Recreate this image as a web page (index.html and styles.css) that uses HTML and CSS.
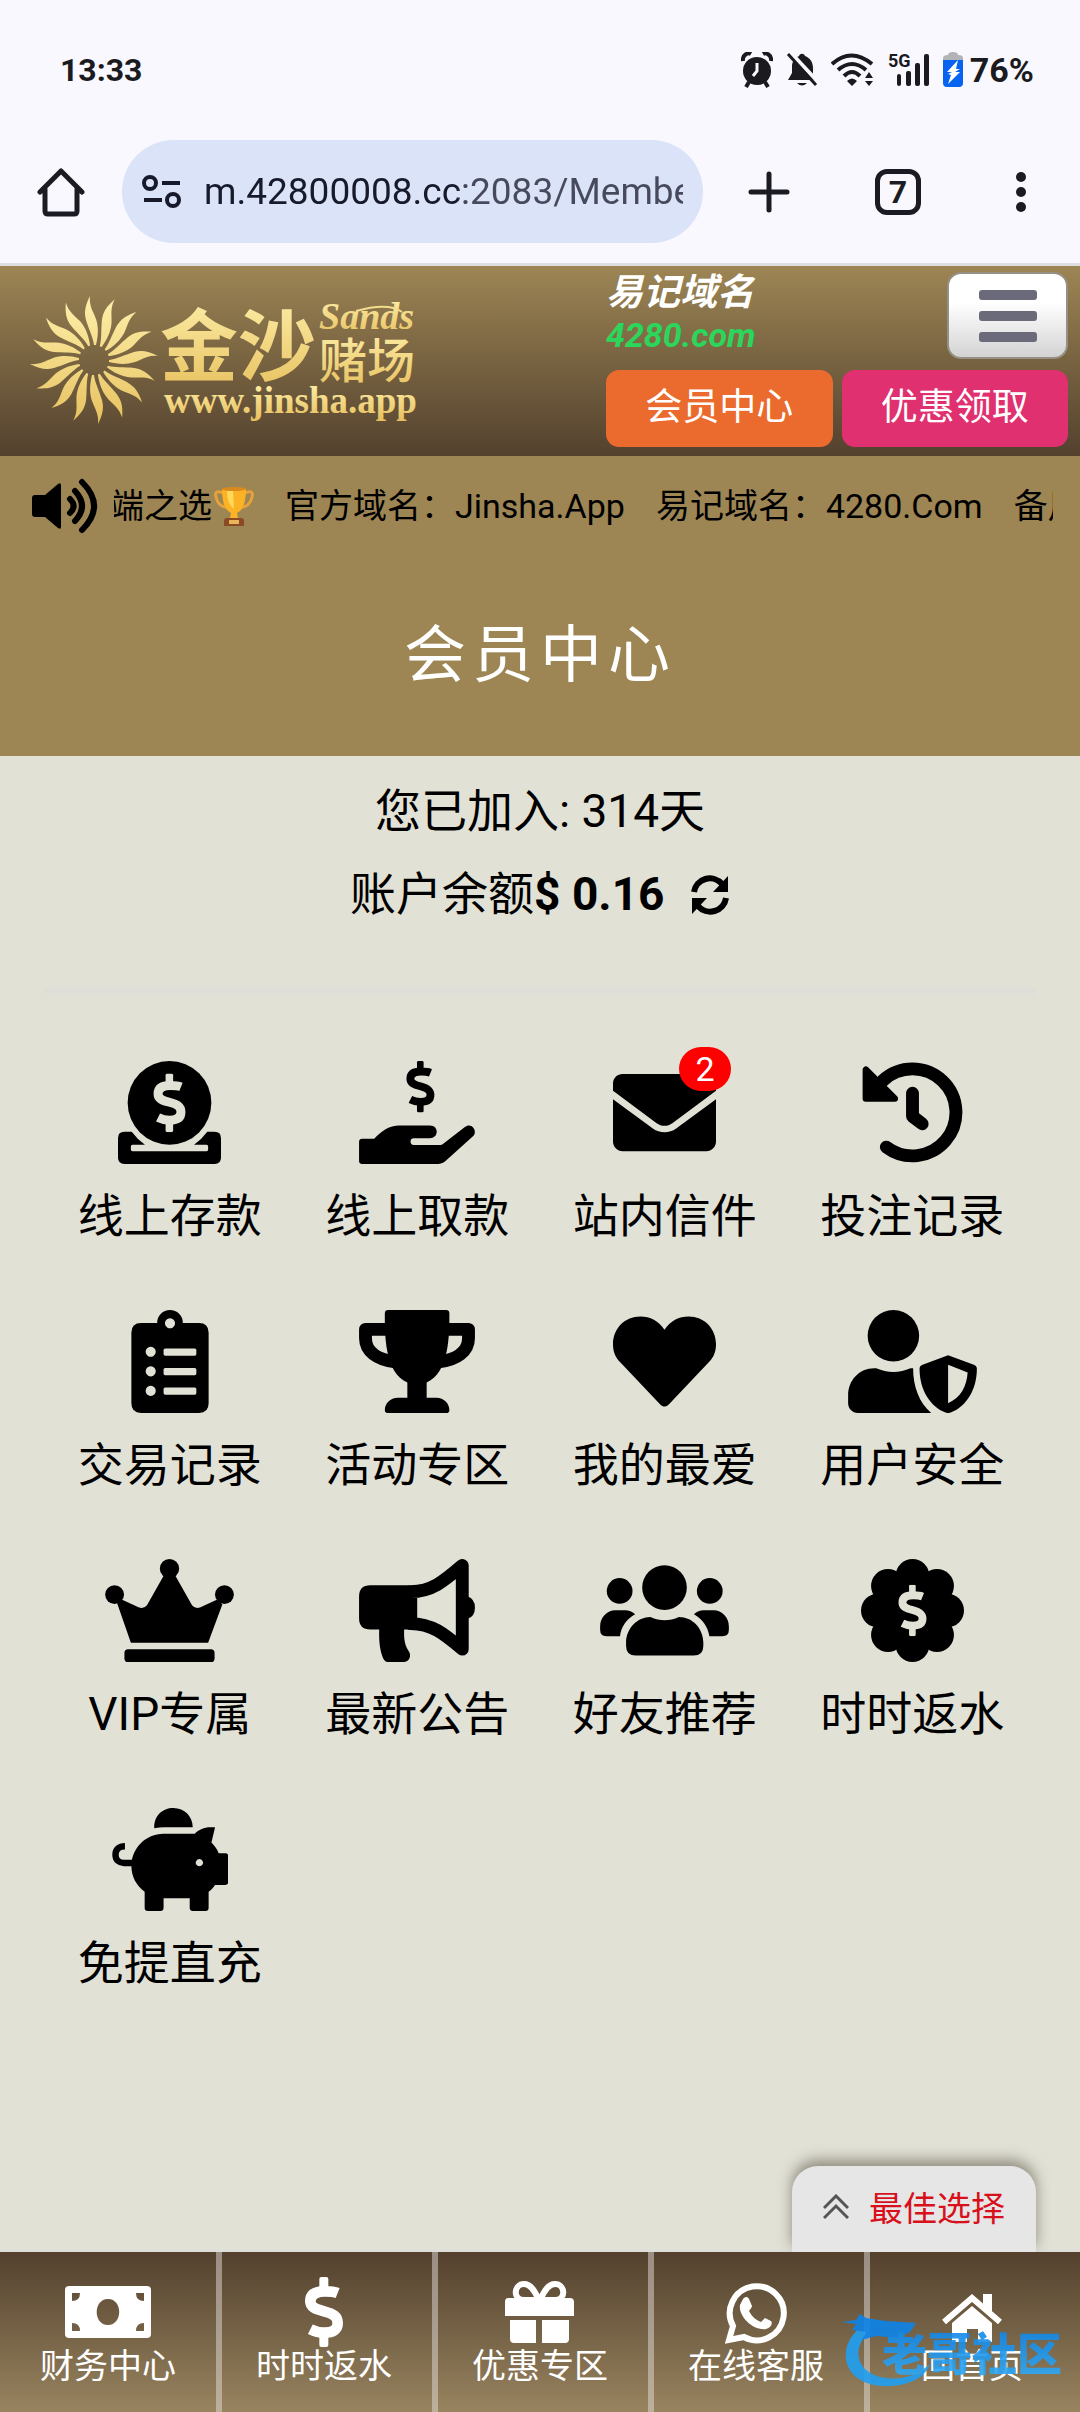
FILE: index.html
```
<!DOCTYPE html>
<html lang="zh-CN">
<head>
  <meta charset="UTF-8">
  <meta name="viewport" content="width=device-width, initial-scale=1">
  <title>会员中心</title>
  <link rel="stylesheet" href="styles.css">
</head>
<body>
  <!-- shared shapes -->
  <svg class="defs" width="0" height="0" aria-hidden="true">
    <defs>
      <linearGradient id="gold" x1="0" y1="0" x2="0" y2="1">
        <stop offset="0" stop-color="#fff2ae"/>
        <stop offset="1" stop-color="#e6bf5c"/>
      </linearGradient>
      <linearGradient id="blue" x1="0" y1="0" x2="0" y2="1">
        <stop offset="0" stop-color="#0a7fe6"/>
        <stop offset="1" stop-color="#35aef5"/>
      </linearGradient>
      <symbol id="dollar" viewBox="0 0 114 210">
        <rect x="43" y="0" width="27" height="42" rx="6" fill="currentColor"/>
        <rect x="43" y="168" width="27" height="42" rx="6" fill="currentColor"/>
        <path d="M98 48C88 44 76 43 60 43C32 43 16 52 16 73C16 90 30 96 57 103C84 110 98 118 98 138C98 158 84 167 58 167C40 167 30 164 16 157" fill="none" stroke="currentColor" stroke-width="32"/>
      </symbol>
      <path id="ray" d="M0-15C-1-23-5-30-8-40C-10-48-9-54-4-64C-5-54-1-49 2-41C5-32 4-23 2-15z"/>
    </defs>
  </svg>

  <div class="status">
    <span class="clock">13:33</span>
    <div class="status-icons">
      <svg width="32" height="36" viewBox="0 0 32 36"><circle cx="16" cy="19" r="14"/><path d="M2 9C1 3 7 0 10 2M30 9C31 3 25 0 22 2M8 30l-3 5M24 30l3 5" fill="none" stroke="#1b1b1f" stroke-width="4"/><path d="M16 11v8l-4 5" fill="none" stroke="#f9f8fe" stroke-width="3"/></svg>
      <svg width="32" height="36" viewBox="0 0 32 36"><path d="M2 28L6 21V13C7 7 11 5 13 4c1-3 5-3 6 0 5 2 8 6 8 12v6l4 6zM11 31h10q-5 5-10 0z"/><path d="M4 0l28 30" stroke="#f9f8fe" stroke-width="4"/><path d="M2 2l28 31" stroke="#1b1b1f" stroke-width="3"/></svg>
      <svg width="44" height="36" viewBox="0 0 44 36"><g fill="none" stroke="#1b1b1f" stroke-width="4"><path d="M1 12Q20-5 41 12M7 18Q21 6 35 18M13 24Q21 16 29 24"/></g><path d="M16 29q5-5 10 0l-5 5zM34 26l4-6 4 6zM34 29h8l-4 5z"/></svg>
      <svg width="42" height="36" viewBox="0 0 42 36"><text x="0" y="15" class="net">5G</text><rect x="9" y="22" width="4" height="12" rx="2"/><rect x="18" y="19" width="5" height="15" rx="2"/><rect x="27" y="11" width="5" height="23" rx="2"/><rect x="36" y="2" width="5" height="32" rx="2"/></svg>
      <svg width="20" height="36" viewBox="0 0 20 36"><path d="M0 9V6q0-3 5-3 0-3 5-3t5 3q5 0 5 3v3z" fill="#b4b3b8"/><path d="M0 8h20v23q0 4-4 4H4q-4 0-4-4z" fill="#0764f0"/><path d="M15 8L4 20h5l-4 2 3 1-3 9 12-12h-5l5-3h-4z" fill="#fff"/></svg>
      <span class="battery">76%</span>
    </div>
  </div>

  <div class="toolbar">
    <button class="tool home" aria-label="主页"><svg width="48" height="50" viewBox="0 0 48 50" fill="none" stroke="#1b1b24" stroke-width="5" stroke-linecap="round" stroke-linejoin="round"><path d="M3 25L24 4l21 21M8 22v22q0 3 3 3h26q3 0 3-3V22"/></svg></button>
    <div class="address">
      <svg width="40" height="34" viewBox="0 0 40 34" fill="none" stroke="#161a2b" stroke-width="4"><circle cx="8" cy="8" r="6"/><path d="M20 8h18M2 25h18"/><circle cx="31" cy="25" r="6"/></svg>
      <input class="url" type="text" aria-label="网址" value="m.42800008.cc:2083/Member">
    </div>
    <button class="tool plus" aria-label="新标签页"><svg width="42" height="42" viewBox="0 0 42 42" stroke="#1b1b24" stroke-width="5" stroke-linecap="round"><path d="M21 3v36M3 21h36"/></svg></button>
    <button class="tool tabs" aria-label="标签页"><span class="count">7</span></button>
    <button class="tool more" aria-label="更多"><svg width="12" height="44" viewBox="0 0 12 44" fill="#1b1b24"><circle cx="6" cy="7" r="5"/><circle cx="6" cy="22" r="5"/><circle cx="6" cy="37" r="5"/></svg></button>
  </div>

  <header class="header">
    <a class="logo" href="#" aria-label="金沙赌场">
      <svg width="390" height="140" viewBox="0 0 390 140">
        <clipPath id="sun">
          <use href="#ray" transform="translate(66 70)"/>
          <use href="#ray" transform="translate(66 70) rotate(22.5)"/>
          <use href="#ray" transform="translate(66 70) rotate(45)"/>
          <use href="#ray" transform="translate(66 70) rotate(67.5)"/>
          <use href="#ray" transform="translate(66 70) rotate(90)"/>
          <use href="#ray" transform="translate(66 70) rotate(112.5)"/>
          <use href="#ray" transform="translate(66 70) rotate(135)"/>
          <use href="#ray" transform="translate(66 70) rotate(157.5)"/>
          <use href="#ray" transform="translate(66 70) rotate(180)"/>
          <use href="#ray" transform="translate(66 70) rotate(202.5)"/>
          <use href="#ray" transform="translate(66 70) rotate(225)"/>
          <use href="#ray" transform="translate(66 70) rotate(247.5)"/>
          <use href="#ray" transform="translate(66 70) rotate(270)"/>
          <use href="#ray" transform="translate(66 70) rotate(292.5)"/>
          <use href="#ray" transform="translate(66 70) rotate(315)"/>
          <use href="#ray" transform="translate(66 70) rotate(337.5)"/>
        </clipPath>
        <circle cx="66" cy="70" r="68" fill="url(#gold)" clip-path="url(#sun)"/>
        <g fill="url(#gold)">
          <text x="132" y="85" class="logo-main">金沙</text>
          <text x="291" y="39" class="logo-script">Sands</text>
          <text x="291" y="88" class="logo-sub">赌场</text>
          <text x="136" y="123" class="logo-url">www.jinsha.app</text>
        </g>
        <path d="M328 21Q360 12 374 22" fill="none" stroke="#f3dc8c" stroke-width="2"/>
      </svg>
    </a>
    <div class="header-side">
      <div class="header-top">
        <p class="domain">易记域名<br><span>4280.com</span></p>
        <button class="menu" aria-label="菜单"><i></i><i></i><i></i></button>
      </div>
      <div class="header-links">
        <a class="pill orange" href="#">会员中心</a>
        <a class="pill pink" href="#">优惠领取</a>
      </div>
    </div>
  </header>

  <div class="notice">
    <svg width="66" height="56" viewBox="0 0 66 56"><path d="M0 20q0-3 3-3h10L26 6q3-2 3 1v42q0 3-3 1L13 39H3q-3 0-3-3z"/><g fill="none" stroke="#000" stroke-width="6" stroke-linecap="round"><path d="M38 21q7 7 0 14M43 13q14 15 0 30M50 4q24 24 0 48"/></g></svg>
    <div class="marquee">
      <div class="marquee-text">
        <span class="first">端之选<svg width="40" height="40" viewBox="0 0 40 40"><path d="M9 7Q0 3 2 11q2 10 13 11M31 7q9-4 7 4-2 10-13 11" fill="none" stroke="#e8a23c" stroke-width="3"/><path d="M8 3h24q0 20-9 24l1 5h-8l1-5Q8 23 8 3z" fill="#fbb224"/><path d="M13 5h6l1 18Q13 18 13 5z" fill="#ffd95c"/><ellipse cx="20" cy="3" rx="12" ry="2" fill="#d98a1c"/><path d="M10 40v-5q0-3 3-3h14q3 0 3 3v5z" fill="#8a4a26"/><path d="M15 34h10v4H15z" fill="#e9b45a"/></svg></span>
        <span>官方域名：Jinsha.App</span>
        <span>易记域名：4280.Com</span>
        <span>备用域名</span>
      </div>
    </div>
  </div>

  <h1 class="title">会员中心</h1>

  <main class="main">
    <div class="account">
      <p>您已加入: 314天</p>
      <p>账户余额<b>$ 0.16</b>
        <button class="refresh" aria-label="刷新"><svg width="40" height="40" viewBox="0 0 40 40"><g fill="none" stroke="#000" stroke-width="6"><path d="M4 17A16 16 0 0 1 32 9M36 23A16 16 0 0 1 8 31"/></g><path d="M38 1v16H23zM2 39V23h15z"/></svg></button>
      </p>
    </div>
    <hr class="line">

    <nav class="grid" aria-label="会员功能">
      <a class="item" href="#">
        <svg width="103" height="103" viewBox="0 0 512 512"><circle cx="256" cy="208" r="208"/><path d="M68 352H32Q0 352 0 384v96q0 32 32 32h448q32 0 32-32v-96q0-32-32-32h-36q-28 38-66 64h62q8 0 8 8v16q0 8-8 8H72q-8 0-8-8v-16q0-8 8-8h62q-38-26-66-64z"/><use class="cut" href="#dollar" x="172" y="62" width="168" height="292"/></svg>
        <span>线上存款</span>
      </a>
      <a class="item" href="#">
        <svg width="116" height="103" viewBox="0 0 576 512"><use href="#dollar" x="223" y="0" width="164" height="256"/><path d="M0 402q0-16 16-16h59C115 345 150 320 200 320H352c22 0 34 14 34 32s-14 32-34 32H272q-16 0-16 16t16 18H400c8 0 14-2 20-8L526 328c14-12 32-10 42 4 12 16 10 34-6 46L427 499c-12 9-28 13-44 13H16q-16 0-16-16z"/></svg>
        <span>线上取款</span>
      </a>
      <a class="item" href="#">
        <svg width="103" height="103" viewBox="0 0 512 512"><path d="M48 64C21 64 0 85 0 112v36L217 309c23 17 55 17 78 0L512 148v-36c0-27-21-48-48-48zM0 190V400c0 27 21 48 48 48H464c27 0 48-21 48-48V190L314 335c-34 25-82 25-116 0z"/></svg>
        <em class="badge">2</em>
        <span>站内信件</span>
      </a>
      <a class="item" href="#">
        <svg width="103" height="103" viewBox="0 0 512 512"><g fill="none" stroke="#000" stroke-width="64" stroke-linecap="round" stroke-linejoin="round"><path d="M108 98A216 216 0 1 1 126 428"/><path d="M256 160V275L304 312"/></g><path d="M24 43V186H168z" stroke="#000" stroke-width="32" stroke-linejoin="round"/></svg>
        <span>投注记录</span>
      </a>
      <a class="item" href="#">
        <svg width="78" height="103" viewBox="0 0 384 512"><path fill-rule="evenodd" d="M48 64H128A64 64 0 0 1 256 64H336q48 0 48 48V464q0 48-48 48H48q-48 0-48-48V112Q0 64 48 64zM192 41a25 25 0 1 0 .1 0zM96 183a25 25 0 1 0 .1 0zM96 280a25 25 0 1 0 .1 0zM96 377a25 25 0 1 0 .1 0zM168 191h147q8 0 8 8v20q0 8-8 8H168q-8 0-8-8v-20q0-8 8-8zM168 288h147q8 0 8 8v20q0 8-8 8H168q-8 0-8-8v-20q0-8 8-8zM168 385h147q8 0 8 8v20q0 8-8 8H168q-8 0-8-8v-20q0-8 8-8z"/></svg>
        <span>交易记录</span>
      </a>
      <a class="item" href="#">
        <svg width="116" height="103" viewBox="0 0 576 512"><path d="M145 0H432q17 0 17 17C449 120 450 310 336 360V436H384c38 0 65 28 65 62q0 14-16 14H145q-17 0-17-14c0-34 27-62 65-62H240V360C126 310 128 120 128 17Q128 0 145 0z"/><path d="M140 96H32V140C32 205 90 246 180 258M436 96H544V140C544 205 486 246 396 258" fill="none" stroke="#000" stroke-width="64" stroke-linejoin="round"/></svg>
        <span>活动专区</span>
      </a>
      <a class="item" href="#">
        <svg width="103" height="103" viewBox="0 0 512 512"><path d="M0 170C0 90 60 32 136 32c48 0 92 22 120 66 28-44 72-66 120-66C452 32 512 90 512 170c0 38-12 66-36 90L276 471c-12 12-28 12-40 0L36 260C12 236 0 208 0 170z"/></svg>
        <span>我的最爱</span>
      </a>
      <a class="item" href="#">
        <svg width="129" height="103" viewBox="0 0 640 512"><circle cx="225" cy="128" r="128"/><path d="M0 464V424C0 350 55 290 130 290h10c27 12 56 18 85 18s58-6 85-18h13c0 90 30 172 90 222H48C21 512 0 491 0 464z"/><path fill-rule="evenodd" d="M497 225L625 272c10 4 15 10 15 20C640 400 585 480 510 510c-8 3-18 3-26 0C410 480 355 400 355 292c0-10 5-16 15-20zM497 272V464C560 435 590 380 594 311z"/></svg>
        <span>用户安全</span>
      </a>
      <a class="item" href="#">
        <svg width="129" height="103" viewBox="0 0 640 512"><circle cx="320" cy="48" r="48"/><circle cx="47" cy="177" r="47"/><circle cx="593" cy="177" r="47"/><path d="M85 203L166 240Q192 250 208 230L295 76H345L432 230Q448 250 474 240L555 203 583 225 512 416H128L58 215z"/><rect x="96" y="448" width="448" height="64" rx="18"/></svg>
        <span>VIP专属</span>
      </a>
      <a class="item" href="#">
        <svg width="116" height="103" viewBox="0 0 576 512"><path d="M56 131H257V350H224C222 400 228 430 248 460c14 24 0 52-26 52H148c-14 0-22-6-28-18-14-34-22-74-20-144H56q-56 0-56-56V187q0-56 56-56zM540 187q36 12 36 55t-36 55z"/><path d="M257 162C360 162 420 112 513 32V448C420 370 360 321 257 321z" fill="none" stroke="#000" stroke-width="64" stroke-linejoin="round"/></svg>
        <span>最新公告</span>
      </a>
      <a class="item" href="#">
        <svg width="129" height="103" viewBox="0 0 640 512"><circle cx="320" cy="142" r="111"/><circle cx="97" cy="159" r="64"/><circle cx="545" cy="159" r="64"/><path d="M129 416C129 345 185 288 250 288c24 12 48 16 71 16s47-4 71-16C459 288 513 345 513 416v16q0 48-48 48H177q-48 0-48-48zM0 335C0 290 35 255 75 255h50c18 0 35 6 49 20C130 300 103 340 99 384H32q-32 0-32-32zM640 335C640 290 605 255 565 255h-50c-18 0-35 6-49 20C510 300 537 340 543 384h65q32 0 32-32z"/></svg>
        <span>好友推荐</span>
      </a>
      <a class="item" href="#">
        <svg width="103" height="103" viewBox="0 0 512 512"><circle cx="256" cy="256" r="180"/><circle cx="256" cy="84" r="84"/><circle cx="256" cy="428" r="84"/><circle cx="84" cy="256" r="84"/><circle cx="428" cy="256" r="84"/><circle cx="134" cy="134" r="84"/><circle cx="378" cy="134" r="84"/><circle cx="134" cy="378" r="84"/><circle cx="378" cy="378" r="84"/><use class="cut" href="#dollar" x="176" y="128" width="160" height="256"/></svg>
        <span>时时返水</span>
      </a>
      <a class="item" href="#">
        <svg width="116" height="103" viewBox="0 0 576 512"><path d="M210 101C206 40 250 0 305 0s96 42 96 96H260q-25 0-50 5z"/><path fill-rule="evenodd" d="M256 128H411C430 108 458 96 488 96H512L494 172C512 190 522 205 530 225H562q16 0 16 16V367q0 16-16 16H512c-8 12-18 24-32 33V496q0 16-16 16H402q-16 0-16-16V448H256V496q0 16-16 16H178q-16 0-16-16V416C120 385 96 340 96 288C96 200 168 128 256 128zM434 254a18 18 0 1 0 .1 0z"/><path d="M64 190C35 190 17 205 17 232s20 41 42 41H110" fill="none" stroke="#000" stroke-width="32"/></svg>
        <span>免提直充</span>
      </a>
    </nav>
  </main>

  <nav class="bottom" aria-label="底部导航">
    <button class="best"><svg width="26" height="26" viewBox="0 0 26 26" fill="none" stroke="#555" stroke-width="3"><path d="M1 14L13 2l12 12M1 24L13 12l12 12"/></svg>最佳选择</button>
    <a href="#"><svg width="86" height="70" viewBox="0 0 86 70"><path fill-rule="evenodd" d="M4 9H82q4 0 4 4V57q0 4-4 4H4q-4 0-4-4V13Q0 9 4 9zM7 16v8q8 0 8-8zM79 16v8q-8 0-8-8zM7 54v-8q8 0 8 8zM79 54v-8q-8 0-8 8zM43 22c-15 0-15 26 0 26s15-26 0-26z"/></svg><span>财务中心</span></a>
    <a href="#"><svg width="40" height="70" viewBox="0 0 40 70"><use href="#dollar" width="40" height="70"/></svg><span>时时返水</span></a>
    <a href="#"><svg width="72" height="70" viewBox="0 0 72 70"><g fill="none" stroke="#fff" stroke-width="6"><path d="M35 23H20C8 23 10 7 20 7 28 7 32 17 35 23zM36 23H51C63 23 61 7 51 7 43 7 39 17 36 23z"/></g><path d="M4 21H66q4 0 4 4V39H1V25q0-4 3-4zM6 43H32V66H10q-4 0-4-4zM38 43H65V62q0 4-4 4H38z"/></svg><span>优惠专区</span></a>
    <a href="#"><svg width="62" height="70" viewBox="0 0 62 70"><path d="M4 63L8 49A27 27 0 1 1 19 60z" fill="none" stroke="#fff" stroke-width="6"/><path d="M18 22c3-3 5-2 6 0l3 7c0 2-2 3-3 5 3 6 7 9 12 11l4-4 6 3c2 2 0 7-5 8-14 2-28-14-26-24z"/></svg><span>在线客服</span></a>
    <a href="#"><svg width="62" height="70" viewBox="0 0 62 70"><path d="M3 45L31 21 59 45" fill="none" stroke="#fff" stroke-width="6"/><path d="M42 17h9v18l-9-8zM11 46L31 29 51 46V65H37V52H26V65H11z"/></svg><span>回首页</span></a>
    <svg class="stamp" width="224" height="76" viewBox="0 0 224 76" aria-hidden="true">
      <path d="M22 11C-8 30-2 74 48 72 70 71 84 62 88 50 74 62 60 66 44 64 14 60 8 34 28 18z" fill="#20a0f2"/>
      <path d="M0 8l14-2 4-6 6 4 20 3 30 2-6 9-12 6-22-2-14 4 4-8-14-2 4-6z" fill="#0c84ea"/>
      <text x="40" y="57" class="stamp-text" fill="url(#blue)">老哥社区</text>
    </svg>
  </nav>
</body>
</html>
```
FILE: styles.css
```
:root {
  --gold: #9d8554;
  --brown: #53412e;
  --bg: #e2e1d6;
  --chrome: #f9f8fe;
  --ink: #1b1b1f;
}
* { box-sizing: border-box; margin: 0; padding: 0; }
body {
  font-family: Roboto, "Noto Sans CJK SC", sans-serif;
  background: var(--bg);
  color: #000;
  min-height: 100vh;
  display: flex;
  flex-direction: column;
}
a { color: inherit; text-decoration: none; }
button { font: inherit; border: none; background: none; }
svg { display: block; }
.defs { position: absolute; }

/* phone status bar */
.status {
  display: flex;
  justify-content: space-between;
  align-items: center;
  height: 140px;
  padding: 0 46px 0 60px;
  background: var(--chrome);
  color: var(--ink);
  font-size: 32px;
  font-weight: 700;
}
.status-icons {
  display: flex;
  align-items: center;
  gap: 13px;
}
.status-icons svg { fill: var(--ink); }
.net { font-size: 18px; font-weight: 700; }
.battery {
  margin-left: -6px;
  font-size: 34px;
}

/* browser toolbar */
.toolbar {
  display: flex;
  align-items: center;
  padding-bottom: 20px;
  background: var(--chrome);
  border-bottom: 3px solid #dedde0;
}
.tool {
  display: flex;
  justify-content: center;
  align-items: center;
  height: 103px;
}
.home { width: 122px; }
.plus { width: 132px; }
.tabs { width: 126px; }
.more { width: 119px; }
.address {
  flex: 1;
  min-width: 0;
  display: flex;
  align-items: center;
  gap: 22px;
  height: 103px;
  padding: 0 20px;
  border-radius: 52px;
  background: #dbe3f8;
}
.url {
  flex: 1;
  min-width: 0;
  border: none;
  outline: none;
  font-family: Roboto, sans-serif;
  font-size: 37px;
  color: transparent;
  background: linear-gradient(90deg, #161a2b 252px, #474a5c 262px);
  background-clip: text;
  -webkit-background-clip: text;
}
.count {
  width: 46px;
  height: 46px;
  border: 5px solid #1b1b24;
  border-radius: 12px;
  font-size: 32px;
  font-weight: 700;
  line-height: 36px;
  color: #1b1b24;
}

/* site header */
.header {
  display: flex;
  justify-content: space-between;
  padding: 6px 12px 9px 28px;
  background: linear-gradient(var(--gold), var(--brown));
}
.logo { padding-top: 18px; }
.logo-main { font-family: "Noto Sans CJK SC", sans-serif; font-size: 78px; font-weight: 700; }
.logo-sub { font-family: "Noto Sans CJK SC", sans-serif; font-size: 48px; font-weight: 500; }
.logo-script { font-family: "Liberation Serif", serif; font-size: 38px; font-style: italic; font-weight: 700; }
.logo-url { font-family: "Liberation Serif", serif; font-size: 37px; font-weight: 700; }
.header-side {
  width: 462px;
  display: flex;
  flex-direction: column;
  gap: 11px;
}
.header-top {
  display: flex;
  justify-content: space-between;
}
.domain {
  font-size: 37px;
  font-weight: 700;
  font-style: italic;
  line-height: 42px;
  color: #fff;
}
.domain span { color: #2bd65b; font-size: 34px; }
.menu {
  width: 121px;
  height: 87px;
  display: flex;
  flex-direction: column;
  justify-content: center;
  align-items: center;
  gap: 11px;
  border: 2px solid #969084;
  border-radius: 14px;
  background: linear-gradient(#fff 35%, #d2d3d2);
}
.menu i {
  width: 58px;
  height: 10px;
  border-radius: 3px;
  background: #6a6a7b;
}
.header-links {
  display: flex;
  gap: 9px;
}
.pill {
  flex: 1;
  height: 77px;
  line-height: 75px;
  border-radius: 13px;
  font-size: 37px;
  text-align: center;
  color: #fff;
}
.orange { background: #eb6a2d; }
.pink { background: #e03070; }

/* scrolling notice */
.notice {
  display: flex;
  align-items: center;
  gap: 16px;
  height: 100px;
  padding: 0 27px 0 32px;
  background: var(--gold);
}
.marquee {
  flex: 1;
  overflow: hidden;
}
.marquee-text {
  display: flex;
  gap: 31px;
  margin-left: -4px;
  font-size: 34px;
  line-height: 50px;
  white-space: nowrap;
}
.first {
  display: flex;
  align-items: center;
  gap: 2px;
}

.title {
  height: 200px;
  line-height: 200px;
  background: var(--gold);
  color: #fff;
  font-size: 62px;
  font-weight: 400;
  letter-spacing: 6px;
  text-align: center;
}

/* member area */
.main { flex: 1; }
.account {
  padding-top: 14px;
  font-size: 46px;
  line-height: 83px;
  text-align: center;
}
.account p { height: 83px; }
.refresh {
  margin-left: 14px;
  vertical-align: middle;
}
.refresh svg { margin-bottom: 6px; }
.line {
  height: 12px;
  margin: 49px 45px 64px;
  border: none;
  background: linear-gradient(#e2e1d6, #dfddd9, #e2e1d6);
}
.grid {
  display: grid;
  grid-template-columns: repeat(4, 1fr);
  padding: 0 44px 0 46px;
}
.item {
  position: relative;
  display: flex;
  flex-direction: column;
  align-items: center;
  gap: 22px;
  padding-bottom: 64px;
  font-size: 46px;
  line-height: 60px;
}
.cut { color: var(--bg); }
.badge {
  position: absolute;
  top: -14px;
  left: 138px;
  width: 52px;
  height: 44px;
  border-radius: 22px;
  background: #f00;
  color: #fff;
  font-size: 34px;
  font-style: normal;
  line-height: 44px;
  text-align: center;
}

/* bottom bar */
.bottom {
  position: sticky;
  bottom: 0;
  display: flex;
  border-top: 3px solid #dfdedb;
  background: linear-gradient(var(--brown), #98845f);
}
.bottom a {
  flex: 1;
  display: flex;
  flex-direction: column;
  align-items: center;
  height: 160px;
  padding-top: 25px;
  color: #fff;
  font-size: 34px;
  line-height: 38px;
}
.bottom a svg { fill: #fff; }
.bottom a + a { box-shadow: inset 6px 0 rgba(226, 220, 215, .5); }
.best {
  position: absolute;
  right: 44px;
  bottom: 100%;
  width: 244px;
  height: 86px;
  padding-bottom: 5px;
  display: flex;
  justify-content: center;
  align-items: center;
  gap: 20px;
  border-radius: 26px 26px 0 0;
  background: #e6e6e6;
  box-shadow: 0 -6px 14px rgba(60, 55, 35, .5);
  clip-path: inset(-30px -30px 0);
  color: #d8101c;
  font-size: 34px;
}
.stamp {
  position: absolute;
  right: 14px;
  bottom: 22px;
  opacity: .9;
  pointer-events: none;
}
.stamp-text {
  font-family: "Noto Sans CJK SC", sans-serif;
  font-size: 45px;
  font-weight: 900;
}
```
